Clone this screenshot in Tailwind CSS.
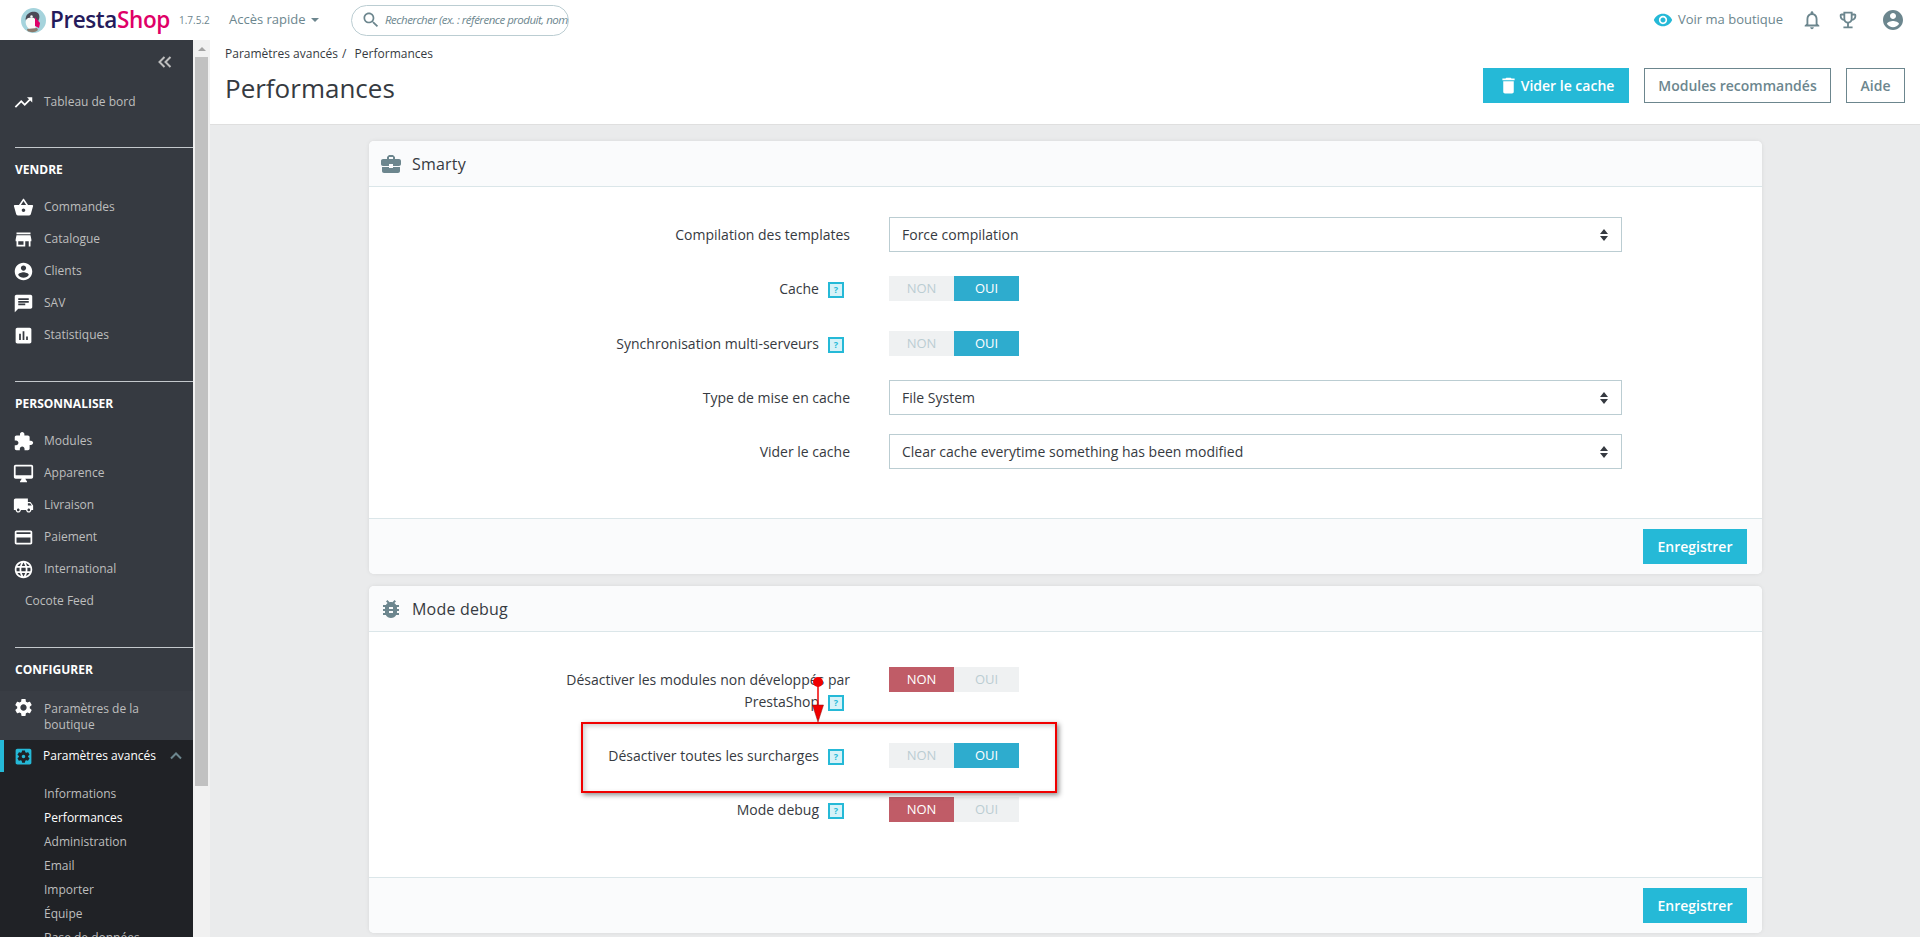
<!DOCTYPE html>
<html lang="fr"><head><meta charset="utf-8"><title>Performances</title>
<script src="https://cdn.jsdelivr.net/npm/@tailwindcss/browser@4"></script></head>
<body class="m-0">
<div class="relative w-[1920px] h-[937px] overflow-hidden flex flex-col bg-[#eaebec] text-[#363a41] font-['Open_Sans',sans-serif]">
  <!-- top bar -->
  <header class="h-10 shrink-0 bg-white flex items-center relative">
    <svg class="ml-[21px] mt-[1px] w-[25px] h-[25px] shrink-0" viewBox="0 0 25 25"><circle cx="12.5" cy="12.500" r="12.500" fill="#a5d3dc"/><path d="M5 9c1-4 6-6 10-5 3 1 4 4 3 7l-1 3-11 1c-1-2-2-4-1-6z" fill="#4b4a56"/><path d="M5 12c2-3 7-3 9-1 1 2 2 4 1 7l-1 3H8c-3-3-4-6-3-9z" fill="#fbfaf8"/><path d="M14 9l5 6-1 5-4-2z" fill="#df0067"/><path d="M6 21l10-1 1 2c-3 3-8 2.500-10.500 1z" fill="#8a7a6c"/><circle cx="10.500" cy="8.500" r="1.200" fill="#fff"/></svg>
    <div class="ml-[4px] w-[130px] text-[22.5px] leading-none font-semibold tracking-[-0.4px] text-[#251b5b]">Presta<span class="text-[#df0067]">Shop</span></div>
    <div class="text-[10px] w-[50px] text-[#6c868e] ml-[-1px]">1.7.5.2</div>
    <div class="text-[13px] text-[#6c868e] flex items-center gap-[5px] w-[122px]">Accès rapide <span class="w-0 h-0 border-x-[4px] border-x-transparent border-t-[4px] border-t-[#6c868e]"></span></div>
    <div class="w-[218px] h-[31px] border border-[#bbcdd2] rounded-full flex items-center pl-[9px] pr-[3px]">
      <svg class="w-[20px] h-[20px] shrink-0 fill-[#6c868e]" viewBox="0 0 24 24"><path d="M15.5 14h-.79l-.28-.27C15.41 12.59 16 11.11 16 9.5 16 5.91 13.09 3 9.5 3S3 5.91 3 9.5 5.91 16 9.5 16c1.61 0 3.09-.59 4.23-1.57l.27.28v.79l5 4.99L20.49 19l-4.99-5zm-6 0C7.01 14 5 11.99 5 9.5S7.01 5 9.5 5 14 7.01 14 9.5 11.99 14 9.5 14z"/></svg>
      <span class="ml-[4px] text-[11.5px] tracking-[-0.5px] italic text-[#6c868e] whitespace-nowrap">Rechercher (ex. : référence produit, nom</span>
    </div>
    <div class="ml-auto flex items-center text-[#6c868e]">
      <svg class="w-[20px] h-[20px] fill-[#25b9d7]" viewBox="0 0 24 24"><path d="M12 4.5C7 4.5 2.73 7.61 1 12c1.73 4.39 6 7.5 11 7.5s9.27-3.11 11-7.5c-1.73-4.39-6-7.5-11-7.5zM12 17c-2.76 0-5-2.24-5-5s2.24-5 5-5 5 2.24 5 5-2.24 5-5 5zm0-8c-1.66 0-3 1.34-3 3s1.34 3 3 3 3-1.34 3-3-1.34-3-3-3z"/></svg>
      <span class="ml-[5px] text-[13px] w-[123px]">Voir ma boutique</span>
      <svg class="w-[22px] h-[22px] fill-[#6c868e]" viewBox="0 0 24 24"><path d="M12 22c1.1 0 2-.9 2-2h-4c0 1.1.9 2 2 2zm6-6v-5c0-3.07-1.63-5.64-4.5-6.32V4c0-.83-.67-1.5-1.5-1.5s-1.5.67-1.5 1.5v.68C7.64 5.36 6 7.92 6 11v5l-2 2v1h16v-1l-2-2zm-2 1H8v-6c0-2.48 1.51-4.5 4-4.5s4 2.02 4 4.5v6z"/></svg>
      <svg class="ml-[14px] w-[22px] h-[22px] fill-[#6c868e]" viewBox="0 0 24 24"><path d="M19 5h-2V3H7v2H5c-1.1 0-2 .9-2 2v1c0 2.55 1.92 4.63 4.39 4.94.63 1.5 1.98 2.63 3.61 2.96V19H7v2h10v-2h-4v-3.1c1.63-.33 2.98-1.46 3.61-2.96C19.08 12.63 21 10.55 21 8V7c0-1.1-.9-2-2-2zM5 8V7h2v3.82C5.84 10.4 5 9.3 5 8zm7 6c-1.65 0-3-1.35-3-3V5h6v6c0 1.65-1.35 3-3 3zm7-6c0 1.3-.84 2.4-2 2.82V7h2v1z"/></svg>
      <svg class="ml-[22px] mr-[15px] w-[24px] h-[24px] fill-[#6c868e]" viewBox="0 0 24 24"><path d="M12 2C6.48 2 2 6.48 2 12s4.48 10 10 10 10-4.48 10-10S17.52 2 12 2zm0 3c1.66 0 3 1.34 3 3s-1.34 3-3 3-3-1.34-3-3 1.34-3 3-3zm0 14.2c-2.5 0-4.71-1.28-6-3.22.03-1.99 4-3.08 6-3.08 1.99 0 5.97 1.09 6 3.08-1.29 1.94-3.5 3.22-6 3.22z"/></svg>
    </div>
  </header>

  <div class="flex flex-1 min-h-0">
    <!-- sidebar -->
    <aside class="w-[193px] shrink-0 bg-[#363a41] text-[12px] text-[#bebebe] flex flex-col overflow-hidden [&>*]:shrink-0">
      <div class="h-[46px] flex justify-end items-end pr-[20px] pb-[16px]">
        <svg class="w-[16px] h-[16px] fill-none stroke-[#bebebe] stroke-2" viewBox="0 0 16 16"><path d="M7.5 3L2.5 8l5 5M13.5 3l-5 5 5 5"/></svg>
      </div>
      <div class="h-8 flex items-center"><svg class="ml-[13px] w-[21px] h-[21px] fill-white" viewBox="0 0 24 24"><path d="M16 6l2.29 2.29-4.88 4.88-4-4L2 16.59 3.41 18l6-6 4 4 6.3-6.29L22 12V6z"/></svg><span class="ml-[10px]">Tableau de bord</span></div>

      <div class="mt-[29px] ml-[15px] border-t border-[#c4c8cc] h-[44px] flex items-center text-white font-bold text-[12px]">VENDRE</div>
      <div class="h-8 flex items-center"><svg class="ml-[13px] w-[21px] h-[21px] fill-white" viewBox="0 0 24 24"><path d="M17.21 9l-4.38-6.56c-.19-.28-.51-.42-.83-.42-.32 0-.64.14-.83.43L6.79 9H2c-.55 0-1 .45-1 1 0 .09.01.18.04.27l2.54 9.27c.23.84 1 1.46 1.92 1.46h13c.92 0 1.69-.62 1.93-1.46l2.54-9.27L23 10c0-.55-.45-1-1-1h-4.79zM9 9l3-4.4L15 9H9zm3 8c-1.1 0-2-.9-2-2s.9-2 2-2 2 .9 2 2-.9 2-2 2z"/></svg><span class="ml-[10px]">Commandes</span></div>
      <div class="h-8 flex items-center"><svg class="ml-[13px] w-[21px] h-[21px] fill-white" viewBox="0 0 24 24"><path d="M20 4H4v2h16V4zm1 10v-2l-1-5H4l-1 5v2h1v6h10v-6h4v6h2v-6h1zm-9 4H6v-4h6v4z"/></svg><span class="ml-[10px]">Catalogue</span></div>
      <div class="h-8 flex items-center"><svg class="ml-[13px] w-[21px] h-[21px] fill-white" viewBox="0 0 24 24"><path d="M12 2C6.48 2 2 6.48 2 12s4.48 10 10 10 10-4.48 10-10S17.52 2 12 2zm0 3c1.66 0 3 1.34 3 3s-1.34 3-3 3-3-1.34-3-3 1.34-3 3-3zm0 14.2c-2.5 0-4.71-1.28-6-3.22.03-1.99 4-3.08 6-3.08 1.99 0 5.97 1.09 6 3.08-1.29 1.94-3.5 3.22-6 3.22z"/></svg><span class="ml-[10px]">Clients</span></div>
      <div class="h-8 flex items-center"><svg class="ml-[13px] w-[21px] h-[21px] fill-white" viewBox="0 0 24 24"><path d="M20 2H4c-1.1 0-1.99.9-1.99 2L2 22l4-4h14c1.1 0 2-.9 2-2V4c0-1.1-.9-2-2-2zM6 9h12v2H6V9zm8 5H6v-2h8v2zm4-6H6V6h12v2z"/></svg><span class="ml-[10px]">SAV</span></div>
      <div class="h-8 flex items-center"><svg class="ml-[13px] w-[21px] h-[21px] fill-white" viewBox="0 0 24 24"><path d="M19 3H5c-1.1 0-2 .9-2 2v14c0 1.1.9 2 2 2h14c1.1 0 2-.9 2-2V5c0-1.1-.9-2-2-2zM9 17H7v-7h2v7zm4 0h-2V7h2v10zm4 0h-2v-4h2v4z"/></svg><span class="ml-[10px]">Statistiques</span></div>

      <div class="mt-[30px] ml-[15px] border-t border-[#c4c8cc] h-[44px] flex items-center text-white font-bold text-[12px]">PERSONNALISER</div>
      <div class="h-8 flex items-center"><svg class="ml-[13px] w-[21px] h-[21px] fill-white" viewBox="0 0 24 24"><path d="M20.5 11H19V7c0-1.1-.9-2-2-2h-4V3.5C13 2.12 11.88 1 10.5 1S8 2.12 8 3.5V5H4c-1.1 0-1.99.9-1.99 2v3.8H3.5c1.49 0 2.7 1.21 2.7 2.7s-1.21 2.7-2.7 2.7H2V20c0 1.1.9 2 2 2h3.8v-1.5c0-1.49 1.21-2.7 2.7-2.7 1.49 0 2.7 1.21 2.7 2.7V22H17c1.1 0 2-.9 2-2v-4h1.5c1.38 0 2.5-1.12 2.5-2.5S21.88 11 20.5 11z"/></svg><span class="ml-[10px]">Modules</span></div>
      <div class="h-8 flex items-center"><svg class="ml-[13px] w-[21px] h-[21px] fill-white" viewBox="0 0 24 24"><path d="M21 2H3c-1.1 0-2 .9-2 2v12c0 1.1.9 2 2 2h7l-2 3v1h8v-1l-2-3h7c1.1 0 2-.9 2-2V4c0-1.1-.9-2-2-2zm0 12H3V4h18v10z"/></svg><span class="ml-[10px]">Apparence</span></div>
      <div class="h-8 flex items-center"><svg class="ml-[13px] w-[21px] h-[21px] fill-white" viewBox="0 0 24 24"><path d="M20 8h-3V4H3c-1.1 0-2 .9-2 2v11h2c0 1.66 1.34 3 3 3s3-1.34 3-3h6c0 1.66 1.34 3 3 3s3-1.34 3-3h2v-5l-3-4zM6 18.5c-.83 0-1.5-.67-1.5-1.5s.67-1.5 1.5-1.5 1.5.67 1.5 1.5-.67 1.5-1.5 1.5zm13.5-9l1.96 2.5H17V9.5h2.5zm-1.5 9c-.83 0-1.5-.67-1.5-1.5s.67-1.5 1.5-1.5 1.5.67 1.5 1.5-.67 1.5-1.5 1.5z"/></svg><span class="ml-[10px]">Livraison</span></div>
      <div class="h-8 flex items-center"><svg class="ml-[13px] w-[21px] h-[21px] fill-white" viewBox="0 0 24 24"><path d="M20 4H4c-1.11 0-1.99.89-1.99 2L2 18c0 1.11.89 2 2 2h16c1.11 0 2-.89 2-2V6c0-1.11-.89-2-2-2zm0 14H4v-6h16v6zm0-10H4V6h16v2z"/></svg><span class="ml-[10px]">Paiement</span></div>
      <div class="h-8 flex items-center"><svg class="ml-[13px] w-[21px] h-[21px] fill-white" viewBox="0 0 24 24"><path d="M11.99 2C6.47 2 2 6.48 2 12s4.47 10 9.99 10C17.52 22 22 17.52 22 12S17.52 2 11.99 2zm6.93 6h-2.95c-.32-1.25-.78-2.45-1.38-3.56 1.84.63 3.37 1.91 4.33 3.56zM12 4.04c.83 1.2 1.48 2.53 1.91 3.96h-3.82c.43-1.43 1.08-2.76 1.91-3.96zM4.26 14C4.1 13.36 4 12.69 4 12s.1-1.36.26-2h3.38c-.08.66-.14 1.32-.14 2 0 .68.06 1.34.14 2H4.26zm.82 2h2.95c.32 1.25.78 2.45 1.38 3.56-1.84-.63-3.37-1.9-4.33-3.56zm2.95-8H5.08c.96-1.66 2.49-2.93 4.33-3.56C8.81 5.55 8.35 6.75 8.03 8zM12 19.96c-.83-1.2-1.48-2.53-1.91-3.96h3.82c-.43 1.43-1.08 2.76-1.91 3.96zM14.34 14H9.66c-.09-.66-.16-1.32-.16-2 0-.68.07-1.35.16-2h4.68c.09.65.16 1.32.16 2 0 .68-.07 1.34-.16 2zm.25 5.56c.6-1.11 1.06-2.31 1.38-3.56h2.95c-.96 1.65-2.49 2.93-4.33 3.56zM16.36 14c.08-.66.14-1.32.14-2 0-.68-.06-1.34-.14-2h3.38c.16.64.26 1.31.26 2s-.1 1.36-.26 2h-3.38z"/></svg><span class="ml-[10px]">International</span></div>
      <div class="h-8 flex items-center pl-[25px]">Cocote Feed</div>

      <div class="mt-[30px] ml-[15px] border-t border-[#c4c8cc] h-[44px] flex items-center text-white font-bold text-[12px]">CONFIGURER</div>
      <div class="h-[49px] flex items-start bg-[#393d44]"><svg class="ml-[13px] mt-[6px] w-[21px] h-[21px] fill-white shrink-0" viewBox="0 0 24 24"><path d="M19.14 12.94c.04-.3.06-.61.06-.94 0-.32-.02-.64-.07-.94l2.03-1.58c.18-.14.23-.41.12-.61l-1.92-3.32c-.12-.22-.37-.29-.59-.22l-2.39.96c-.5-.38-1.03-.7-1.62-.94l-.36-2.54c-.04-.24-.24-.41-.48-.41h-3.84c-.24 0-.43.17-.47.41l-.36 2.54c-.59.24-1.13.57-1.62.94l-2.39-.96c-.22-.08-.47 0-.59.22L2.74 8.87c-.12.21-.08.47.12.61l2.03 1.58c-.05.3-.09.63-.09.94s.02.64.07.94l-2.03 1.58c-.18.14-.23.41-.12.61l1.92 3.32c.12.22.37.29.59.22l2.39-.96c.5.38 1.03.7 1.62.94l.36 2.54c.05.24.24.41.48.41h3.84c.24 0 .44-.17.47-.41l.36-2.54c.59-.24 1.13-.56 1.62-.94l2.39.96c.22.08.47 0 .59-.22l1.92-3.32c.12-.22.07-.47-.12-.61l-2.01-1.58zM12 15.6c-1.98 0-3.6-1.62-3.6-3.6s1.62-3.6 3.6-3.6 3.6 1.62 3.6 3.6-1.62 3.6-3.6 3.6z"/></svg><span class="ml-[10px] w-[120px] leading-4 mt-[10px]">Paramètres de la boutique</span></div>
      <div class="flex-1 bg-[#202226] relative">
        <div class="h-8 flex items-center text-white border-l-4 border-[#25b9d7]"><svg class="ml-[9px] w-[21px] h-[21px] fill-[#25b9d7]" viewBox="0 0 24 24"><path d="M12 10c-1.1 0-2 .9-2 2s.9 2 2 2 2-.9 2-2-.9-2-2-2zm7-7H5c-1.11 0-2 .9-2 2v14c0 1.1.89 2 2 2h14c1.11 0 2-.9 2-2V5c0-1.1-.89-2-2-2zm-1.75 9c0 .23-.02.46-.05.68l1.48 1.16c.13.11.17.3.08.45l-1.4 2.42c-.09.15-.27.21-.43.15l-1.74-.7c-.36.28-.76.51-1.18.69l-.26 1.85c-.03.17-.18.3-.35.3h-2.8c-.17 0-.32-.13-.35-.29l-.26-1.85c-.43-.18-.82-.41-1.18-.69l-1.74.7c-.16.06-.34 0-.43-.15l-1.4-2.42c-.09-.15-.05-.34.08-.45l1.48-1.16c-.03-.23-.05-.46-.05-.69 0-.23.02-.46.05-.68l-1.48-1.16c-.13-.11-.17-.3-.08-.45l1.4-2.42c.09-.15.27-.21.43-.15l1.74.7c.36-.28.76-.51 1.18-.69l.26-1.85c.03-.17.18-.3.35-.3h2.8c.17 0 .32.13.35.29l.26 1.85c.43.18.82.41 1.18.69l1.74-.7c.16-.06.34 0 .43.15l1.4 2.42c.09.15.05.34-.08.45l-1.48 1.16c.03.23.05.46.05.69z"/></svg><span class="ml-[9px] w-[127px] whitespace-nowrap">Paramètres avancés</span><svg class="w-[12px] h-[12px] shrink-0 fill-none stroke-[#6c868e] stroke-2" viewBox="0 0 12 12"><path d="M1 8.5L6 3.5l5 5"/></svg></div>
        <div class="pt-[10px] pl-[44px] text-[12px] text-[#bebebe]">
          <div class="h-6 leading-6">Informations</div>
          <div class="h-6 leading-6 text-white">Performances</div>
          <div class="h-6 leading-6">Administration</div>
          <div class="h-6 leading-6">Email</div>
          <div class="h-6 leading-6">Importer</div>
          <div class="h-6 leading-6">Équipe</div>
          <div class="h-6 leading-6">Base de données</div>
        </div>
      </div>
    </aside>
    <!-- sidebar scrollbar -->
    <div class="w-[17px] shrink-0 bg-[#f1f1f1] flex flex-col items-center">
      <div class="h-[17px] flex items-center justify-center"><span class="w-0 h-0 border-x-[4px] border-x-transparent border-b-[4px] border-b-[#a3a3a3]"></span></div>
      <div class="w-[13px] h-[729px] bg-[#c1c1c1]"></div>
    </div>

    <!-- main -->
    <main class="flex-1 min-w-0 flex flex-col">
      <div class="h-[85px] shrink-0 bg-white border-b border-[#dfdfdf] px-[15px] relative flex">
        <div class="flex-1">
          <div class="text-[12px] leading-4 mt-[6px] text-[#363a41]">Paramètres avancés <span class="ml-[1px]">/</span> <span class="ml-[5px]">Performances</span></div>
          <h1 class="text-[26px] leading-9 mt-[8px] font-normal text-[#363a41]">Performances</h1>
        </div>
        <div class="flex items-start pt-[28px] gap-[15px]">
          <button class="w-[146px] h-[35px] bg-[#25b9d7] text-white text-[14px] font-semibold flex items-center justify-center"><svg class="w-[21px] h-[21px] fill-white mr-[2px]" viewBox="0 0 24 24"><path d="M6 19c0 1.1.9 2 2 2h8c1.1 0 2-.9 2-2V7H6v12zM19 4h-3.5l-1-1h-5l-1 1H5v2h14V4z"/></svg>Vider le cache</button>
          <button class="w-[187px] h-[35px] border border-[#6c868e] bg-white text-[#6c868e] text-[14px] font-semibold">Modules recommandés</button>
          <button class="w-[59px] h-[35px] border border-[#6c868e] bg-white text-[#6c868e] text-[14px] font-semibold">Aide</button>
        </div>
      </div>

      <div class="pt-[16px] pl-[159px] w-[1552px] flex flex-col gap-[12px]">
        <!-- Smarty -->
        <section class="bg-white rounded-[5px] shadow-[0_0_4px_rgba(0,0,0,0.08)] overflow-hidden">
          <div class="h-[46px] bg-[#fafbfc] border-b border-[#dbe6e9] flex items-center pl-[10px]">
            <svg class="w-[24px] h-[24px] fill-[#6c868e]" viewBox="0 0 24 24"><path d="M10 16v-1H3.01L3 19c0 1.11.89 2 2 2h14c1.11 0 2-.89 2-2v-4h-7v1h-4zm10-9h-4.01V5l-2-2h-4l-2 2v2H4c-1.1 0-2 .9-2 2v3c0 1.11.89 2 2 2h6v-2h4v2h6c1.1 0 2-.9 2-2V9c0-1.1-.9-2-2-2zm-6 0h-4V5h4v2z"/></svg>
            <span class="ml-[9px] text-[16px] font-medium tracking-[0.2px]">Smarty</span>
          </div>
          <div class="pt-[30px] pb-[49px] text-[14px] flex flex-col gap-[19px]">
            <div class="h-[35px] flex items-center"><div class="w-[481px] text-right">Compilation des templates</div>
              <div class="ml-[39px] w-[733px] h-[35px] border border-[#bbcdd2] flex items-center justify-between px-[12px]"><span>Force compilation</span><svg class="w-[8px] h-[12px] fill-[#363a41] mr-[1px]" viewBox="0 0 8 12"><path d="M4 0l4 5H0zM4 12L0 7h8z"/></svg></div></div>
            <div class="h-[35px] flex items-center"><div class="w-[481px] text-right pr-[6px]">Cache<span class="inline-block align-middle ml-[9px] w-4 h-4 border-2 border-[#25b9d7] bg-[#d6f2f8] text-[#25b9d7] text-[9px] font-bold leading-3 text-center">?</span></div>
              <div class="ml-[39px] flex text-[13px] font-medium h-[25px] items-stretch"><div class="w-[65px] bg-[#eff1f2] text-[#bbcdd2] flex items-center justify-center">NON</div><div class="w-[65px] bg-[#2eacce] text-white flex items-center justify-center">OUI</div></div></div>
            <div class="h-[35px] mt-[1px] flex items-center"><div class="w-[481px] text-right pr-[6px]">Synchronisation multi-serveurs<span class="inline-block align-middle ml-[9px] w-4 h-4 border-2 border-[#25b9d7] bg-[#d6f2f8] text-[#25b9d7] text-[9px] font-bold leading-3 text-center">?</span></div>
              <div class="ml-[39px] flex text-[13px] font-medium h-[25px] items-stretch"><div class="w-[65px] bg-[#eff1f2] text-[#bbcdd2] flex items-center justify-center">NON</div><div class="w-[65px] bg-[#2eacce] text-white flex items-center justify-center">OUI</div></div></div>
            <div class="h-[35px] flex items-center"><div class="w-[481px] text-right">Type de mise en cache</div>
              <div class="ml-[39px] w-[733px] h-[35px] border border-[#bbcdd2] flex items-center justify-between px-[12px]"><span>File System</span><svg class="w-[8px] h-[12px] fill-[#363a41] mr-[1px]" viewBox="0 0 8 12"><path d="M4 0l4 5H0zM4 12L0 7h8z"/></svg></div></div>
            <div class="h-[35px] flex items-center"><div class="w-[481px] text-right">Vider le cache</div>
              <div class="ml-[39px] w-[733px] h-[35px] border border-[#bbcdd2] flex items-center justify-between px-[12px]"><span>Clear cache everytime something has been modified</span><svg class="w-[8px] h-[12px] fill-[#363a41] mr-[1px]" viewBox="0 0 8 12"><path d="M4 0l4 5H0zM4 12L0 7h8z"/></svg></div></div>
          </div>
          <div class="h-[56px] bg-[#fafbfc] border-t border-[#dbe6e9] flex items-start justify-end pt-[10px] pr-[15px]"><button class="w-[104px] h-[35px] bg-[#25b9d7] text-white text-[14px] font-semibold">Enregistrer</button></div>
        </section>

        <!-- Debug -->
        <section class="bg-white rounded-[5px] shadow-[0_0_4px_rgba(0,0,0,0.08)] overflow-hidden">
          <div class="h-[46px] bg-[#fafbfc] border-b border-[#dbe6e9] flex items-center pl-[10px]">
            <svg class="w-[24px] h-[24px] fill-[#6c868e]" viewBox="0 0 24 24"><path d="M20 8h-2.81c-.45-.78-1.07-1.45-1.82-1.96L17 4.41 15.59 3l-2.17 2.17C12.96 5.06 12.49 5 12 5c-.49 0-.96.06-1.41.17L8.41 3 7 4.41l1.62 1.63C7.88 6.55 7.26 7.22 6.81 8H4v2h2.09c-.05.33-.09.66-.09 1v1H4v2h2v1c0 .34.04.67.09 1H4v2h2.81c1.04 1.79 2.97 3 5.19 3s4.15-1.21 5.19-3H20v-2h-2.09c.05-.33.09-.66.09-1v-1h2v-2h-2v-1c0-.34-.04-.67-.09-1H20V8zm-6 8h-4v-2h4v2zm0-4h-4v-2h4v2z"/></svg>
            <span class="ml-[9px] text-[16px] font-medium tracking-[0.2px]">Mode debug</span>
          </div>
          <div class="pt-[35px] pb-[50px] text-[14px]">
            <div class="flex items-start h-[71px]"><div class="w-[481px] pl-[190px] text-right leading-[22px] pt-[2px]">Désactiver les modules non développés par <span class="whitespace-nowrap">PrestaShop<span class="inline-block align-middle ml-[9px] mr-[6px] w-4 h-4 border-2 border-[#25b9d7] bg-[#d6f2f8] text-[#25b9d7] text-[9px] font-bold leading-3 text-center">?</span></span></div>
              <div class="ml-[39px] flex text-[13px] font-medium h-[25px] items-stretch"><div class="w-[65px] bg-[#c05c67] text-white flex items-center justify-center">NON</div><div class="w-[65px] bg-[#eff1f2] text-[#bbcdd2] flex items-center justify-center">OUI</div></div></div>
            <div class="h-[35px] mb-[19px] flex items-center"><div class="w-[481px] text-right pr-[6px]">Désactiver toutes les surcharges<span class="inline-block align-middle ml-[9px] w-4 h-4 border-2 border-[#25b9d7] bg-[#d6f2f8] text-[#25b9d7] text-[9px] font-bold leading-3 text-center">?</span></div>
              <div class="ml-[39px] flex text-[13px] font-medium h-[25px] items-stretch"><div class="w-[65px] bg-[#eff1f2] text-[#bbcdd2] flex items-center justify-center">NON</div><div class="w-[65px] bg-[#2eacce] text-white flex items-center justify-center">OUI</div></div></div>
            <div class="h-[35px] flex items-center"><div class="w-[481px] text-right pr-[6px]">Mode debug<span class="inline-block align-middle ml-[9px] w-4 h-4 border-2 border-[#25b9d7] bg-[#d6f2f8] text-[#25b9d7] text-[9px] font-bold leading-3 text-center">?</span></div>
              <div class="ml-[39px] flex text-[13px] font-medium h-[25px] items-stretch"><div class="w-[65px] bg-[#c05c67] text-white flex items-center justify-center">NON</div><div class="w-[65px] bg-[#eff1f2] text-[#bbcdd2] flex items-center justify-center">OUI</div></div></div>
          </div>
          <div class="h-[56px] bg-[#fafbfc] border-t border-[#dbe6e9] flex items-start justify-end pt-[10px] pr-[15px]"><button class="w-[104px] h-[35px] bg-[#25b9d7] text-white text-[14px] font-semibold">Enregistrer</button></div>
        </section>
      </div>
    </main>
  </div>

  <!-- annotation drawn over the screenshot -->
  <div class="absolute left-[581px] top-[722px] w-[476px] h-[71px] border-2 border-[#f00000] shadow-[2px_2px_5px_rgba(0,0,0,0.45),inset_2px_2px_5px_rgba(0,0,0,0.2)]"></div>
  <svg class="absolute left-[808px] top-[672px] w-[22px] h-[52px]" viewBox="0 0 22 52"><circle cx="10" cy="10" r="5" fill="#f00000"/><path d="M10 10v25" stroke="#f00000" stroke-width="1.5"/><path d="M4.500 33h11L10 50z" fill="#f00000" stroke="#8a1010" stroke-width="0.5"/></svg>
</div>
</body></html>
